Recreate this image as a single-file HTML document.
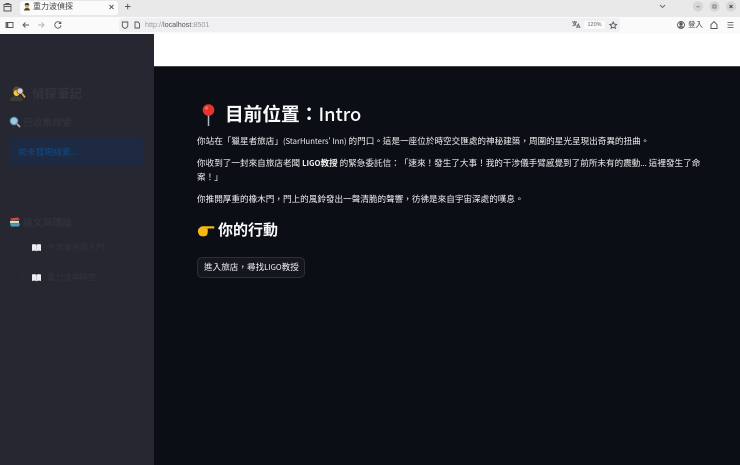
<!DOCTYPE html>
<html lang="zh-Hant"><head><meta charset="utf-8"><title>重力波偵探</title>
<style>
*{box-sizing:border-box;margin:0;padding:0}
html,body{width:740px;height:465px;overflow:hidden;background:#0b0e14}
body{position:relative;font-family:"Liberation Sans","Noto Sans CJK TC",sans-serif;filter:blur(.25px);text-spacing-trim:space-all}
.a{position:absolute;white-space:nowrap}
.cjk{font-family:"Noto Sans CJK TC",sans-serif}
svg{position:absolute;overflow:visible}
.p{color:#f0f0f2;font-size:8.6px;line-height:12px;left:197px}
.l{font-size:7.7px}
.s{color:#31333f}
</style></head><body>
<div class="a" style="left:0;top:0;width:740px;height:17px;background:#e9e9ea"></div>
<div class="a" style="left:20px;top:1px;width:98px;height:14px;background:#fbfbfb;border-radius:3px"></div>
<div class="a" style="left:0;top:17px;width:740px;height:17px;background:#fafafb"></div>
<div class="a" style="left:119px;top:18px;width:131px;height:14px;background:#f0f0f2;border-radius:3px 0 0 3px"></div>
<div class="a" style="left:250px;top:18px;width:370px;height:14px;background:#f0f0f2;border-radius:0 3px 3px 0"></div>

<svg style="left:0;top:0" width="740" height="34" fill="none" stroke="#55555a" stroke-width=".9">
<path d="M4 4.500h7v6.500h-7zM4 6.500h7M6 4.500v-1h3v1"/>
<path d="M125 6.500h5.500M127.700 3.800v5.400"/><path d="M109.500 5l4 4m0-4l-4 4"/>
<path d="M6 22.500h7v5h-7z"/><path d="M7.500 22.500v5" stroke-width="1.600"/>
<path d="M29 25h-6m2.500-2.500L23 25l2.500 2.500"/>
<path d="M38 25h6m-2.500-2.500L44 25l-2.500 2.500" stroke="#b5b5b8"/>
<path d="M60.500 23a3.200 3.200 0 1 0 .6 2.500M60.800 21.500v2h-2"/>
<path d="M122 22h5.500v3.500c0 1.500-1.500 2.500-2.750 3-1.250-.5-2.750-1.500-2.750-3z" transform="translate(.3 0)"/>
<path d="M135 22h3l1.500 1.500v4.500h-4.500z"/>
<path d="M572 22h5m-2.500-1v1m1.500 0c-.4 2-1.800 3.500-3.500 4m1-3c.5 1 1.500 2 3 2.500M576.500 28l1.800-4 1.800 4m-3-1h2.400" stroke="#66666a"/>
<path d="M613.200 22l1 2.100 2.400.3-1.700 1.600.4 2.300-2.100-1.100-2.100 1.100.4-2.300-1.700-1.600 2.400-.3z"/>
<circle cx="681" cy="25" r="3.500"/><circle cx="681" cy="24" r="1.300" fill="#55555a"/><path d="M678.800 27.500c1-1.500 3.400-1.500 4.400 0" fill="#55555a"/>
<path d="M711 28.500v-4l3-3 3 3v4zM710.500 28.500h7"/>
<path d="M727.500 22.500h6M727.500 25h6M727.500 27.500h6" stroke="#77777b"/>
<path d="M660 5l2.500 2.500L665 5" stroke="#66666a"/>
</svg>
<svg style="left:0;top:0" width="740" height="17">
<circle cx="698" cy="6.500" r="5.200" fill="#d6d6d8"/><circle cx="714.500" cy="6.500" r="5.200" fill="#d6d6d8"/><circle cx="731" cy="6.500" r="5.200" fill="#d6d6d8"/>
<path d="M696.500 6.800h3" stroke="#666" stroke-width=".8"/><rect x="713" y="5" width="3" height="3" fill="none" stroke="#666" stroke-width=".8"/><path d="M729.500 5l3 3m0-3l-3 3" stroke="#444" stroke-width=".9"/>
<path d="M24 10.500c.3-2 1.500-2.500 3-2.500s2.700.5 3 2.500z" fill="#4a4238"/><circle cx="27" cy="6" r="2" fill="#e3b04a"/><path d="M24.500 5.200h5l-1-2.200h-3z" fill="#4d4034"/>
</svg>
<div class="a cjk" style="left:33px;top:0;font-size:8px;line-height:13px;color:#444">重力波偵探</div>
<div class="a" style="left:145px;top:18px;font-size:7.200px;line-height:14px;color:#9b9b9f">http://<span style="color:#56565a">localhost</span>:8501</div>
<div class="a" style="left:584px;top:21px;width:21px;height:8px;background:#fafafb;border-radius:2px;font-size:5.500px;line-height:8px;text-align:center;color:#66666a">120%</div>
<div class="a cjk" style="left:688px;top:18px;font-size:7.500px;line-height:14px;color:#47474b">登入</div>

<div class="a" style="left:0;top:34px;width:154px;height:431px;background:#262730"></div>
<div class="a" style="left:154px;top:34px;width:586px;height:32px;background:#fff"></div>
<div class="a" style="left:154px;top:66px;width:586px;height:1px;background:#45464c"></div>

<svg style="left:9px;top:85px" width="17" height="17">
<path d="M1 16c0-4 3-5 6.500-5s6 1 6.500 5z" fill="#3f3a36"/><path d="M3 6.500c1-2.500 2-5 4.500-5s3.500 1 4 4z" fill="#5b4a35"/><circle cx="7.500" cy="8" r="3" fill="#f5c542"/><circle cx="11" cy="6" r="3" fill="#c9d5dc" stroke="#6a5a4a" stroke-width=".8"/><path d="M13 8.500l3 4" stroke="#e7a92e" stroke-width="1.800"/>
</svg>
<div class="a cjk s" style="left:32px;top:84px;font-size:12.500px;font-weight:700;line-height:18px">偵探筆記</div>
<svg style="left:9px;top:116px" width="12" height="12"><circle cx="5" cy="5" r="3.800" fill="#9fc9dc" stroke="#5a87a5" stroke-width="1.100"/><path d="M8 8l3 3" stroke="#a9a9b0" stroke-width="1.800"/></svg>
<div class="a cjk s" style="left:23px;top:115px;font-size:9.800px;font-weight:500;line-height:14px">已收集線索</div>
<div class="a" style="left:9px;top:137px;width:134px;height:29px;background:#1e2a42;border-radius:3px"></div>
<div class="a cjk" style="left:18px;top:145px;font-size:8.800px;line-height:13px;color:#0f4a8a">尚未發現線索...</div>
<svg style="left:9px;top:216px" width="12" height="12"><path d="M1 2.500l8-1 2 2-8 1z" fill="#d9483b"/><path d="M1 4.800l9 0v2.400h-9z" fill="#d9d9d2"/><path d="M1 7.500h10l-1 3h-8z" fill="#4d9db5"/></svg>
<div class="a cjk s" style="left:23px;top:215px;font-size:9.800px;font-weight:500;line-height:14px">論文與理論</div>
<div class="a s" style="left:21px;top:241px;font-size:8px;line-height:12px">›</div>
<div class="a s" style="left:21px;top:271px;font-size:8px;line-height:12px">›</div>
<svg style="left:31px;top:243px" width="11" height="9"><path d="M1 1.500c1.500-.6 3-.6 4.500.3 1.500-.9 3-.9 4.500-.3v6.500c-1.500-.5-3-.5-4.500.3C4 7.500 2.500 7.500 1 8z" fill="#eceff1"/><path d="M5.500 2v6" stroke="#9aa" stroke-width=".5"/></svg>
<svg style="left:31px;top:273px" width="11" height="9"><path d="M1 1.500c1.500-.6 3-.6 4.500.3 1.500-.9 3-.9 4.500-.3v6.500c-1.500-.5-3-.5-4.500.3C4 7.500 2.500 7.500 1 8z" fill="#eceff1"/><path d="M5.500 2v6" stroke="#9aa" stroke-width=".5"/></svg>
<div class="a cjk s" style="left:47px;top:241px;font-size:8.200px;line-height:12px">干涉儀原理入門</div>
<div class="a cjk s" style="left:47px;top:271px;font-size:8.200px;line-height:12px">重力波與時空</div>

<svg style="left:199px;top:103px" width="20" height="24">
<path d="M9.500 10v13" stroke="#a9b8c4" stroke-width="1.500"/><circle cx="9.500" cy="7" r="5.800" fill="#e6342c"/><circle cx="7.500" cy="5" r="1.500" fill="#f2726b"/>
</svg>
<div class="a cjk" style="left:225px;top:100px;font-size:18.700px;font-weight:700;line-height:28px;color:#fafafa">目前位置：<span style="font-weight:500;font-size:18.300px">Intro</span></div>

<div class="a p cjk" style="top:135px">你站在「獵星者旅店」<span class="l">(StarHunters' Inn)</span> 的門口。這是一座位於時空交匯處的神秘建築，周圍的星光呈現出奇異的扭曲。</div>
<div class="a p cjk" style="top:157px">你收到了一封來自旅店老闆 <b><span class="l">LIGO</span>教授</b> 的緊急委託信：「速來！發生了大事！我的干涉儀手臂感覺到了前所未有的震動<span class="l">...</span> 這裡發生了命</div>
<div class="a p cjk" style="top:171px">案！」</div>
<div class="a p cjk" style="top:193px">你推開厚重的橡木門，門上的風鈴發出一聲清脆的聲響，彷彿是來自宇宙深處的嘆息。</div>

<svg style="left:197px;top:223px" width="18" height="15">
<path d="M1 7c1-2.500 3-3.800 5-3.800h10.500c1.200 0 1.200 2.300 0 2.300h-6c.5 1 .5 4.500-.5 6.500-.5 1-3 1.500-5 1.300C2 13.300.5 9.500 1 7z" fill="#f7b512"/>
</svg>
<div class="a cjk" style="left:218px;top:219px;font-size:15px;font-weight:700;line-height:22px;color:#fafafa">你的行動</div>

<div class="a" style="left:197px;top:257px;width:108px;height:21px;background:#14171d;border:1px solid #2e3037;border-radius:5px"></div>
<div class="a cjk" style="left:204px;top:261px;font-size:8.600px;line-height:13px;color:#f0f0f2">進入旅店，尋找<span class="l">LIGO</span>教授</div>
</body></html>
